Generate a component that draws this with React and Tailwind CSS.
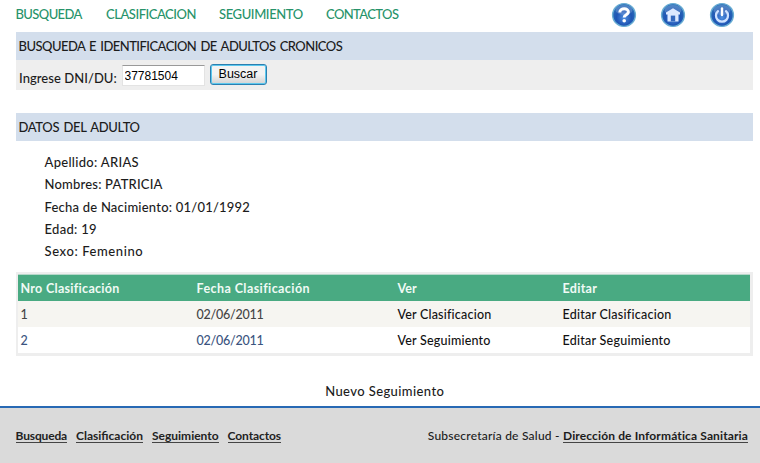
function Orb({ id, children }) {
  return (
    <svg viewBox="0 0 26 26" className="size-[26px]">
      <defs>
        <radialGradient id={id} cx="50%" cy="62%" r="55%">
          <stop offset="0" stopColor="#4f8fe0" />
          <stop offset="0.6" stopColor="#1f55b4" />
          <stop offset="1" stopColor="#2a6cb8" />
        </radialGradient>
      </defs>
      <circle cx="13" cy="13" r="11.4" fill={`url(#${id})`} stroke="#69add3" strokeWidth="1.4" />
      <ellipse cx="13" cy="8" rx="8.5" ry="5" fill="#fff" opacity="0.18" />
      {children}
    </svg>
  );
}

const people = [
  ["Apellido: ARIAS", "tracking-[0.3px]"],
  ["Nombres: PATRICIA", "tracking-[0.2px]"],
  ["Fecha de Nacimiento: 01/01/1992", "tracking-[0.22px]"],
  ["Edad: 19", "tracking-[0.3px]"],
  ["Sexo: Femenino", "tracking-[0.6px]"],
];

const rows = [
  ["1", "02/06/2011", "Ver Clasificacion", "Editar Clasificacion", "bg-[#f6f5f1] text-[#444]"],
  ["2", "02/06/2011", "Ver Seguimiento", "Editar Seguimiento", "bg-white text-[#3b5480]"],
];

export default function App() {
  return (
    <div className="flex h-[463px] w-[760px] flex-col overflow-hidden bg-white font-['Lato',sans-serif] text-[13px] font-medium text-[#1c1c1c]">
      <header className="flex h-8 shrink-0 items-start pl-[15.5px] pr-[25.5px]">
        <nav className="flex flex-1 pt-[4px] leading-[20px] text-[#27936a]">
          <a className="w-[90.5px] tracking-[-0.6px]">BUSQUEDA</a>
          <a className="w-[113px] tracking-[-0.47px]">CLASIFICACION</a>
          <a className="w-[107px] tracking-[-0.4px]">SEGUIMIENTO</a>
          <a className="tracking-[-0.6px]">CONTACTOS</a>
        </nav>
        <div className="flex gap-[22.7px] pt-[2px]">
          <Orb id="help">
            <path d="M8.8 10.6C8.8 5.4 17.6 5.6 17.4 10.2C17.2 12.8 13.2 12.6 13.2 15.4" fill="none" stroke="#fff" strokeWidth="3" />
            <circle cx="13.2" cy="18.8" r="1.8" fill="#fff" />
          </Orb>
          <Orb id="home">
            <path d="M13 6.2L6 10.6v1.8h1.5v7h11v-7h1.5v-1.8z" fill="#dce9ff" />
            <path d="M10.8 19.4v-5.8h4.4v5.8z" fill="#3469be" />
          </Orb>
          <Orb id="power">
            <path d="M9 9.2a6 6 0 1 0 8 0" fill="none" stroke="#cfe2ff" strokeWidth="2.3" strokeLinecap="round" />
            <path d="M13 6.4v6.6" stroke="#fff" strokeWidth="2.4" strokeLinecap="round" />
          </Orb>
        </div>
      </header>

      <main className="ml-[15.5px] flex w-[737.5px] shrink-0 flex-col">
        <h1 className="h-7 bg-[#d3deec] pl-[3px] leading-[29px] tracking-[-0.54px] [word-spacing:1.5px]">
          BUSQUEDA E IDENTIFICACION DE ADULTOS CRONICOS
        </h1>
        <form className="flex h-[30px] items-start bg-[#eee] pl-[3.5px]">
          <label className="w-[102.5px] pt-[8px] leading-[20px] tracking-[0.05px]">Ingrese DNI/DU:</label>
          <input
            readOnly
            value="37781504"
            className="mt-[5px] h-[21px] w-[83px] border border-[#e3e3e3] border-t-[#999] bg-white px-[2px] font-['Liberation_Sans',sans-serif] text-[12px] font-normal text-black outline-none"
          />
          <button
            type="button"
            className="ml-[5px] mt-[4px] h-[21px] w-[57px] rounded-[3px] border border-[#2c7fb0] bg-linear-to-b from-[#f3f3f3] from-50% to-[#d2d2d2] font-['Liberation_Sans',sans-serif] text-[12.5px] font-normal leading-[17px] text-black shadow-[inset_0_0_0_1px_#5cc8ee]"
          >
            Buscar
          </button>
        </form>

        <h2 className="mt-[22.5px] h-7 bg-[#d3deec] pl-[3px] leading-[29px] tracking-[-0.35px] [word-spacing:1.5px]">DATOS DEL ADULTO</h2>
        <ul className="mt-[10.5px] h-[121px] pl-[29px] leading-[22.3px]">
          {people.map(([text, cls]) => (
            <li key={text} className={cls}>{text}</li>
          ))}
        </ul>

        <section className="h-[84px] border-2 border-[#eee] border-b-[3px] border-r-[3px] text-[12.5px] leading-[27px]">
          <div className="grid h-[27px] grid-cols-[176px_201px_165px_1fr] border-t border-[#b6d8ca] bg-[#49aa82] pl-[3px] font-bold text-[#f0faf5]">
            <span className="tracking-[0.3px]">Nro Clasificación</span>
            <span className="tracking-[0.42px]">Fecha Clasificación</span>
            <span className="tracking-[0.1px]">Ver</span>
            <span className="tracking-[0.3px]">Editar</span>
          </div>
          {rows.map(([n, date, view, edit, cls]) => (
            <div key={n} className={`grid h-[26px] grid-cols-[176px_201px_165px_1fr] pl-[3px] leading-[28px] ${cls}`}>
              <span>{n}</span>
              <span className="tracking-[-0.25px]">{date}</span>
              <a className="tracking-[0.2px] text-[#111]">{view}</a>
              <a className="tracking-[0.25px] text-[#111]">{edit}</a>
            </div>
          ))}
        </section>
        <a className="mt-[25px] h-[25px] self-center pl-[1px] leading-[20px] tracking-[0.4px]">Nuevo Seguimiento</a>
      </main>

      <footer className="flex flex-1 items-start justify-between border-t-2 border-[#2869b4] bg-[#dadada] pl-[15.5px] pr-[12px] pt-[18px] text-[12px] leading-[20px]">
        <nav className="flex font-bold text-[#222]">
          <a className="mr-[9px] h-[17px] border-b border-[#444] tracking-[-0.15px]">Busqueda</a>
          <a className="mr-[9px] h-[17px] border-b border-[#444]">Clasificación</a>
          <a className="mr-[9px] h-[17px] border-b border-[#444]">Seguimiento</a>
          <a className="h-[17px] border-b border-[#444] tracking-[-0.1px]">Contactos</a>
        </nav>
        <p className="flex whitespace-pre tracking-[0.22px]">
          Subsecretaría de Salud - <a className="h-[17px] border-b border-[#444] font-bold tracking-[0.13px]">Dirección de Informática Sanitaria</a>
        </p>
      </footer>
    </div>
  );
}
